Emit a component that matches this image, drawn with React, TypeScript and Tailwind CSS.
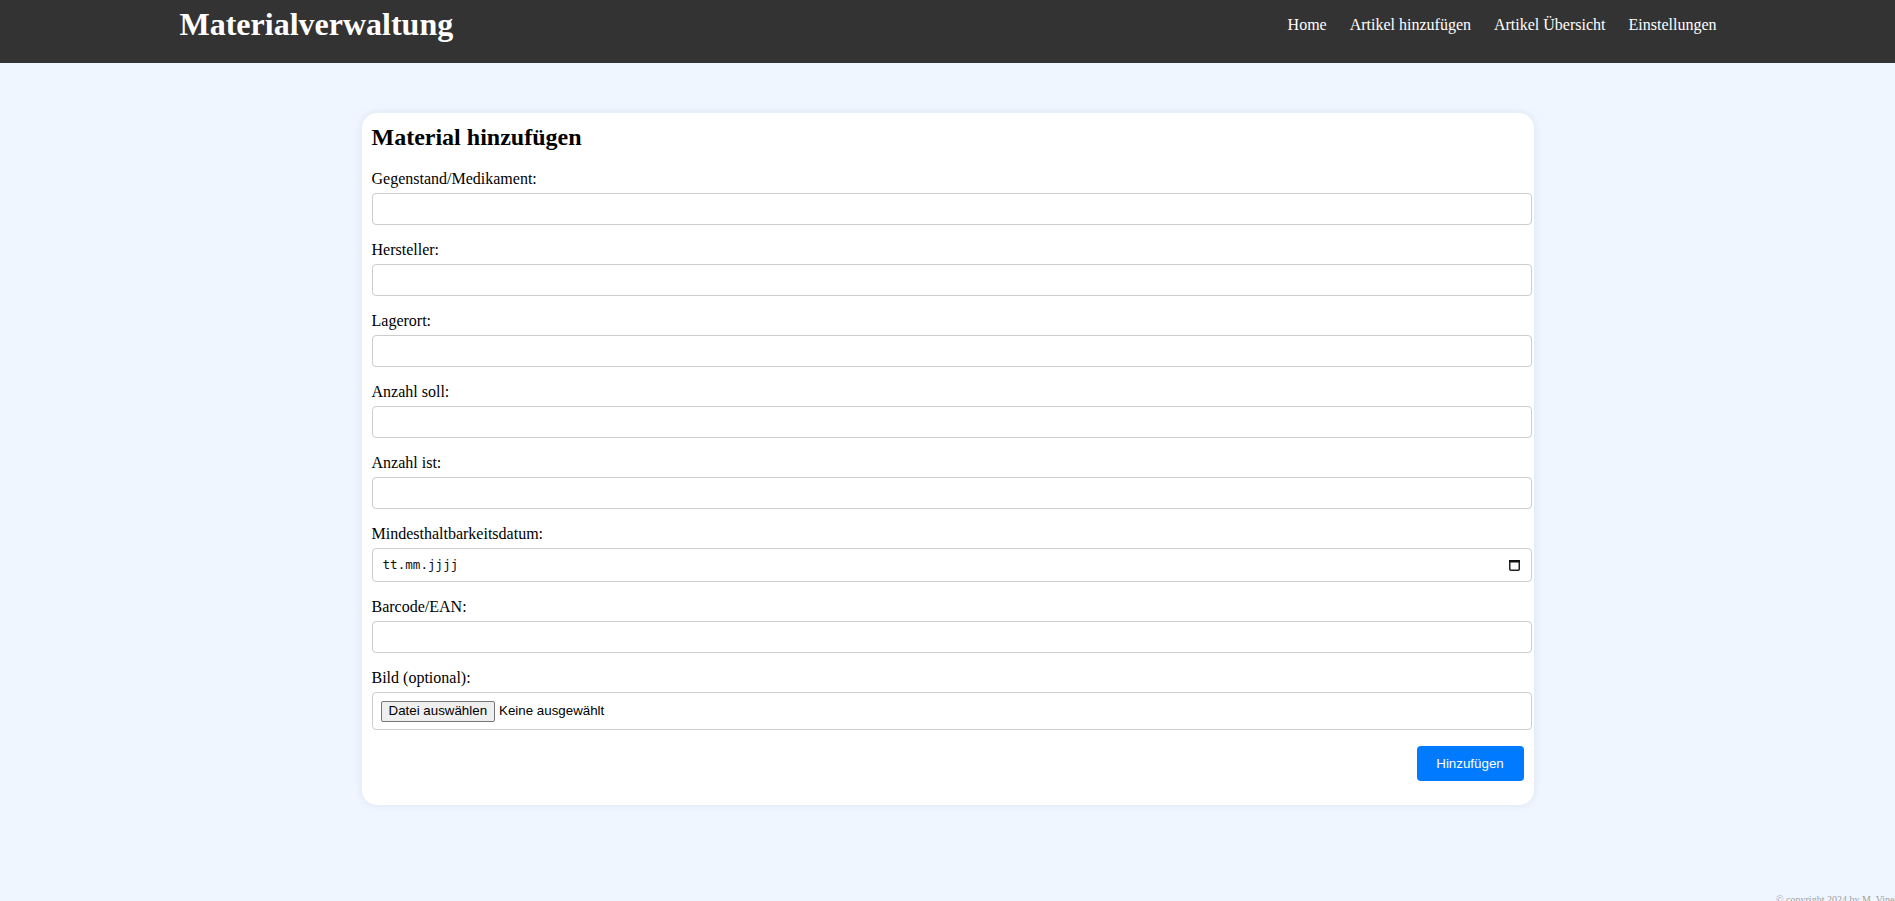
const FIELDS = [
  { label: "Gegenstand/Medikament:", type: "text" },
  { label: "Hersteller:", type: "text" },
  { label: "Lagerort:", type: "text" },
  { label: "Anzahl soll:", type: "text" },
  { label: "Anzahl ist:", type: "text" },
  { label: "Mindesthaltbarkeitsdatum:", type: "date" },
  { label: "Barcode/EAN:", type: "text" },
  { label: "Bild (optional):", type: "file" },
];

const NAV = ["Home", "Artikel hinzufügen", "Artikel Übersicht", "Einstellungen"];

function CalendarIcon() {
  return (
    <svg width="11" height="12" viewBox="0 0 11 12" fill="none">
      <rect x="0.75" y="1.75" width="9.5" height="9.5" rx="1" stroke="#222" strokeWidth="1.5" />
      <rect x="0" y="1" width="11" height="2.5" fill="#111" />
    </svg>
  );
}

function Field({ label, type }: { label: string; type: string }) {
  return (
    <div className="mb-[16px]">
      <label className="block text-[16px] leading-[18px] mb-[5px] text-black">{label}</label>
      {type === "text" && (
        <input
          type="text"
          className="block w-[calc(100%+8px)] h-[32px] bg-white border border-[#cccccc] rounded-[4px] px-[8px] text-[13px] outline-none"
        />
      )}
      {type === "date" && (
        <div className="flex items-center justify-between w-[calc(100%+8px)] h-[34px] bg-white border border-[#cccccc] rounded-[4px] pl-[10px] pr-[11px]">
          <span className="text-[12.6px] text-[#111] font-['DejaVu_Sans_Mono',monospace]">tt.mm.jjjj</span>
          <CalendarIcon />
        </div>
      )}
      {type === "file" && (
        <div className="flex items-center w-[calc(100%+8px)] h-[38px] bg-white border border-[#cccccc] rounded-[4px] px-[8px] font-['Liberation_Sans',Arial,sans-serif] text-[13.33px] text-black">
          <button className="h-[21px] px-[7px] bg-[#efefef] border border-[#767676] rounded-[2px] leading-none">
            Datei auswählen
          </button>
          <span className="ml-[4px]">Keine ausgewählt</span>
        </div>
      )}
    </div>
  );
}

export default function App() {
  return (
    <div className="relative min-h-[901px] overflow-hidden bg-[#eff6ff] font-['Liberation_Serif','Times_New_Roman',serif]">
      {/* Header */}
      <header className="h-[63px] bg-[#333333]">
        <div className="w-[1536px] mx-auto flex justify-between items-start">
          <h1 className="mt-[6px] text-[32px] leading-[37px] font-bold text-white">Materialverwaltung</h1>
          <nav className="mt-[16px] mr-[-1px] flex gap-[23px] text-[16px] leading-[18px] text-white">
            {NAV.map(n => (
              <a key={n} href="#" className="text-white">{n}</a>
            ))}
          </nav>
        </div>
      </header>

      {/* Card */}
      <main className="w-[1172px] mx-auto mt-[50px] bg-white rounded-[15px] p-[10px] pb-[24px] shadow-[0_0_10px_rgba(0,0,0,0.08)]">
        <h2 className="text-[24px] leading-[28px] font-bold text-black mb-[19px]">Material hinzufügen</h2>
        {FIELDS.map(f => (
          <Field key={f.label} label={f.label} type={f.type} />
        ))}
        <div className="flex justify-end">
          <button className="w-[107px] h-[35px] bg-[#007bff] text-white rounded-[4px] text-[13.33px] font-['Liberation_Sans',Arial,sans-serif]">
            Hinzufügen
          </button>
        </div>
      </main>

      {/* Footer */}
      <footer className="absolute left-[1776px] top-[894px] whitespace-nowrap text-[10px] leading-[12px] text-[#a0a0a0]">
        © copyright 2024 by M. Vinet
      </footer>
    </div>
  );
}
